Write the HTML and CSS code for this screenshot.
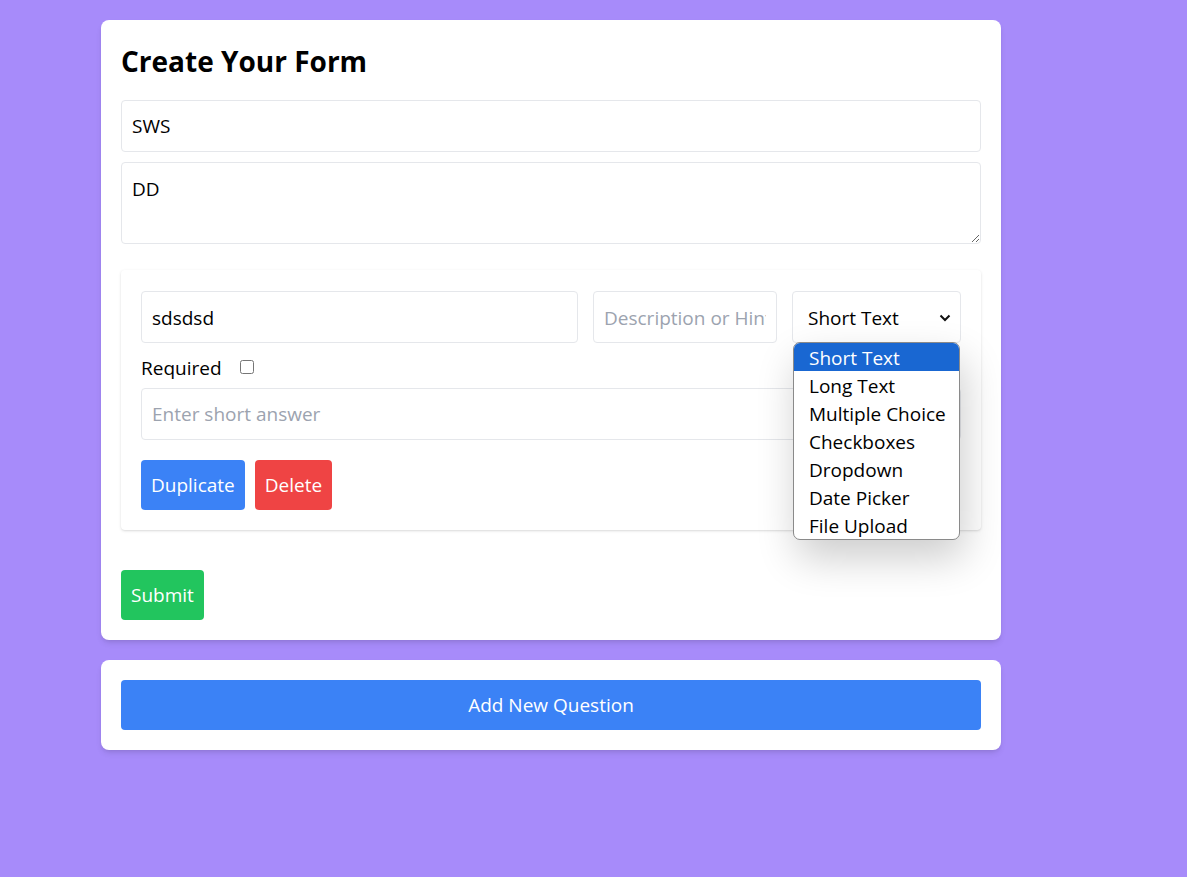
FILE: index.html
```html
<!DOCTYPE html>
<html lang="en">
<head>
<meta charset="utf-8">
<title>Create Your Form</title>
<link rel="stylesheet" href="styles.css">
</head>
<body>
<main class="page">
  <section class="card">
    <h1 class="title">Create Your Form</h1>
    <input class="field" type="text" value="SWS">
    <textarea class="field area">DD</textarea>

    <div class="question">
      <div class="q-row">
        <input class="field q-title" type="text" value="sdsdsd">
        <input class="field q-desc" type="text" placeholder="Description or Hint">
        <div class="select-wrap">
          <select class="field q-type">
            <option>Short Text</option>
            <option>Long Text</option>
            <option>Multiple Choice</option>
            <option>Checkboxes</option>
            <option>Dropdown</option>
            <option>Date Picker</option>
            <option>File Upload</option>
          </select>
          <svg class="chev" width="12" height="8" viewBox="0 0 12 8"><path d="M1.5 1.5 L6 6 L10.5 1.5" fill="none" stroke="#111" stroke-width="2"/></svg>
          <ul class="popup">
            <li class="sel">Short Text</li>
            <li>Long Text</li>
            <li>Multiple Choice</li>
            <li>Checkboxes</li>
            <li>Dropdown</li>
            <li>Date Picker</li>
            <li>File Upload</li>
          </ul>
        </div>
      </div>
      <label class="req">Required <input type="checkbox" class="chk"></label>
      <input class="field" type="text" placeholder="Enter short answer">
      <div class="actions">
        <button class="btn blue">Duplicate</button>
        <button class="btn red">Delete</button>
      </div>
    </div>

    <button class="btn green submit">Submit</button>
  </section>

  <section class="card add-card">
    <button class="btn blue wide">Add New Question</button>
  </section>
</main>
</body>
</html>
```

FILE: styles.css
```css
* { box-sizing: border-box; }
html, body { margin: 0; }
body {
  background: #a78bfa;
  font-family: "Segoe UI", "Open Sans", "Noto Sans", sans-serif;
  color: #000;
  min-height: 877px;
}
.page {
  width: 900px;
  margin-left: 101px;
  padding-top: 20px;
  display: flex;
  flex-direction: column;
  gap: 20px;
}
.card {
  background: #fff;
  border-radius: 8px;
  padding: 20px;
  box-shadow: 0 4px 6px -1px rgba(0,0,0,0.1), 0 2px 4px -2px rgba(0,0,0,0.1);
  display: flex;
  flex-direction: column;
}
.title {
  font-size: 28px;
  line-height: 36px;
  font-weight: 700;
  margin: 3px 0 21px 0;
}
.field {
  font-family: inherit;
  font-size: 19px;
  color: #000;
  height: 52px;
  padding: 0 10px;
  border: 1px solid #e5e7eb;
  border-radius: 4px;
  background: #fff;
  width: 100%;
  outline: none;
}
.field::placeholder { color: #9ca3af; }
.area {
  height: 82px;
  margin-top: 10px;
  padding: 12px 10px;
  line-height: 28px;
  resize: vertical;
}
.question {
  margin-top: 26px;
  padding: 21px 20px 20px 20px;
  border-radius: 4px;
  box-shadow: 0 1px 3px 0 rgba(0,0,0,0.13), 0 1px 2px -1px rgba(0,0,0,0.1);
  display: flex;
  flex-direction: column;
}
.q-row {
  display: flex;
  gap: 15px;
}
.q-title { width: 437px; flex: none; padding-top: 2px; }
.q-desc { width: 184px; flex: none; padding-top: 2px; }
.select-wrap {
  position: relative;
  width: 169px;
  flex: none;
}
.q-type {
  appearance: none;
  -webkit-appearance: none;
  padding-left: 15px;
  padding-top: 2px;
}
.chev {
  position: absolute;
  right: 10px;
  top: 23px;
}
.popup {
  position: absolute;
  left: 1px;
  top: 51px;
  width: 167px;
  margin: 0;
  padding: 0;
  list-style: none;
  background: #fff;
  border: 1px solid #8a8a8a;
  border-radius: 7px;
  overflow: hidden;
  box-shadow: 4px 18px 40px rgba(0,0,0,0.2);
  z-index: 5;
}
.popup li {
  font-size: 19px;
  line-height: 25px;
  height: 28px;
  padding: 3px 0 0 15px;
  white-space: nowrap;
}
.popup li.sel {
  background: #1967d2;
  color: #fff;
}
.req {
  font-size: 19px;
  line-height: 24px;
  margin: 13px 0 8px 0;
  display: flex;
  align-items: center;
  gap: 18px;
}
.chk {
  margin: 0;
  width: 14px;
  height: 14px;
  position: relative;
  top: -1px;
}
.actions {
  display: flex;
  gap: 10px;
  margin-top: 20px;
}
.btn {
  font-family: inherit;
  font-size: 19px;
  color: #fff;
  border: none;
  border-radius: 4px;
  height: 50px;
  padding: 0 10px;
  cursor: pointer;
}
.blue { background: #3b82f6; }
.red { background: #ef4444; }
.green { background: #22c55e; }
.submit {
  margin-top: 40px;
  align-self: flex-start;
}
.wide { width: 100%; }
```
